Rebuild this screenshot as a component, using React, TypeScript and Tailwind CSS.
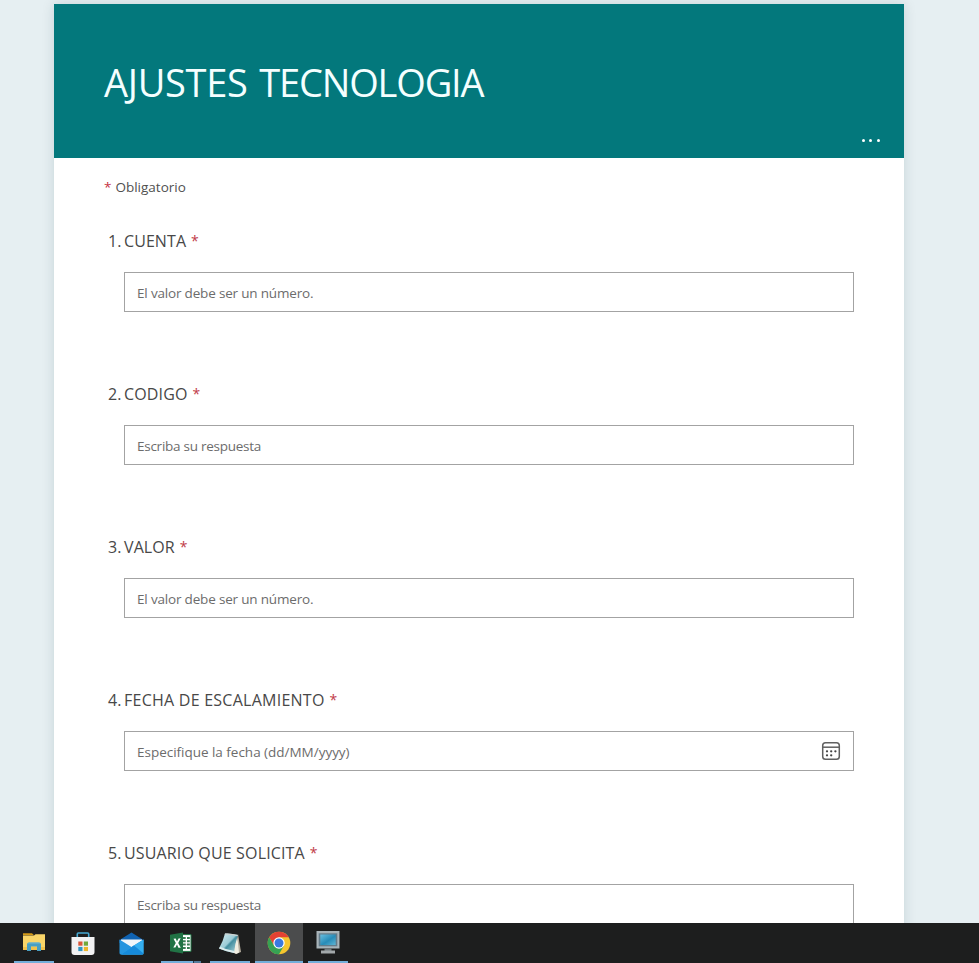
import React from 'react';

type Question = {
  title: string;
  hint: string;
  titleSpacing: string;
  hintSpacing: string;
  date?: boolean;
};

const questions: Question[] = [
  { title: 'CUENTA', hint: 'El valor debe ser un número.', titleSpacing: 'tracking-[0.08px]', hintSpacing: 'tracking-[-0.18px]' },
  { title: 'CODIGO', hint: 'Escriba su respuesta', titleSpacing: 'tracking-[0.15px]', hintSpacing: 'tracking-[-0.26px]' },
  { title: 'VALOR', hint: 'El valor debe ser un número.', titleSpacing: 'tracking-[0.1px]', hintSpacing: 'tracking-[-0.18px]' },
  { title: 'FECHA DE ESCALAMIENTO', hint: 'Especifique la fecha (dd/MM/yyyy)', titleSpacing: 'tracking-[0.25px]', hintSpacing: 'tracking-[-0.02px]', date: true },
  { title: 'USUARIO QUE SOLICITA', hint: 'Escriba su respuesta', titleSpacing: 'tracking-[0.15px]', hintSpacing: 'tracking-[-0.26px]' },
];

function CalendarIcon() {
  return (
    <svg width="20" height="20" viewBox="0 0 20 20" fill="none" stroke="#606060" strokeWidth="1.5">
      <rect x="1.7" y="1.7" width="16.6" height="16.6" rx="2.8" />
      <path d="M1.7 6.2h16.6" />
      <g fill="#444" stroke="none">
        <circle cx="6" cy="10.3" r="1.15" />
        <circle cx="10.2" cy="10.3" r="1.15" />
        <circle cx="14.4" cy="10.3" r="1.15" />
        <circle cx="6" cy="14.3" r="1.15" />
        <circle cx="10.2" cy="14.3" r="1.15" />
      </g>
    </svg>
  );
}

function QuestionBlock({ q, n }: { q: Question; n: number }) {
  return (
    <section className="h-[153px] pl-[54px] pr-[50px]">
      <div className="flex h-6 items-center whitespace-nowrap text-[16px] leading-6 text-[#484848]">
        <span className="w-4 shrink-0">{n}.</span>
        <span className={q.titleSpacing}>{q.title}</span>
        <span className="ml-[5px] text-[14px] text-[#bf3b48]">*</span>
      </div>
      <div className="ml-4 mt-[19px] flex h-10 items-center justify-between border border-[#a3a3a3] bg-white pl-3 pr-3">
        <span className={'whitespace-nowrap pt-0.5 text-[13.5px] leading-5 text-[#6c6c6c] ' + q.hintSpacing}>{q.hint}</span>
        {q.date && <CalendarIcon />}
      </div>
    </section>
  );
}

function FolderIcon() {
  return (
    <svg width="24" height="24" viewBox="0 0 24 24">
      <path d="M1 2.200h9l2 2H1z" fill="#d49a17" />
      <path d="M1 4.600h11l1.500-1.400H23V19H1z" fill="#f9d568" />
      <path d="M1 16h22v3H1z" fill="#f1c24b" />
      <path d="M5 20v-6.500q0-2 2-2h10q2 0 2 2V20h-4v-4.400H9V20z" fill="#489fc3" />
      <path d="M7 11.500h10l1.400 1H5.600z" fill="#70bad5" />
    </svg>
  );
}

function StoreIcon() {
  return (
    <svg width="24" height="25" viewBox="0 0 24 25">
      <path d="M6.300 6V3q0-1 1-1h9.400q1 0 1 1v3" fill="none" stroke="#46a9d3" strokeWidth="1.600" />
      <path d="M.5 6h23v15q0 3-3 3h-17q-3 0-3-3z" fill="#f2f2f3" />
      <path d="M7.300 10.500h4.200v4.200H7.300z" fill="#dc5639" />
      <path d="M12.800 10.500H17v4.200h-4.200z" fill="#71a83b" />
      <path d="M7.300 15.900h4.200v4.200H7.300z" fill="#3195c2" />
      <path d="M12.800 15.900H17v4.200h-4.200z" fill="#edb62c" />
    </svg>
  );
}

function MailIcon() {
  return (
    <svg width="25" height="23" viewBox="0 0 25 23">
      <path d="M.5 8 12.500.5l12 7.500v3H.5z" fill="#0f62b1" />
      <path d="M2 7.500h21V15H2z" fill="#f0f6fa" />
      <path d="M.5 7.500 12.500 15l12-7.500V21q0 1.500-1.500 1.500H2Q.5 22.500.5 21z" fill="#2595df" />
      <path d="M24.500 7.500v14q0 1-1.500 1H2L15 13.500z" fill="#35aff0" />
      <path d="m2 22.500 13-9 9.500 8q0 1-1.500 1z" fill="#168ada" />
    </svg>
  );
}

function ExcelIcon() {
  return (
    <svg width="24" height="22" viewBox="0 0 24 22">
      <path d="M12 2.600h10v16.800H12z" fill="#fff" stroke="#237746" strokeWidth="1" />
      <path d="M14 5h2.700v2H14zm4 0h2.800v2H18zm-4 3.300h2.700v2H14zm4 0h2.800v2H18zm-4 3.300h2.700v2H14zm4 0h2.800v2H18zM14 15h2.700v2H14zm4 0h2.800v2H18z" fill="#397f54" />
      <path d="M1 2.800 14 .5v21L1 19.200z" fill="#217345" />
      <path d="m4.500 6.700 2.200-.1 1.300 2.900 1.500-3.100 2.200-.1-2.500 4.800 2.600 4.700-2.400-.1L8 12.600l-1.600 3-2.100-.1 2.500-4.400z" fill="#fff" />
    </svg>
  );
}

function NotepadIcon() {
  return (
    <svg width="24" height="23" viewBox="0 0 24 23">
      <defs>
        <linearGradient id="note" x1="0" y1="0" x2="1" y2="1">
          <stop stopColor="#d7eff3" />
          <stop offset=".48" stopColor="#9bcbd6" />
          <stop offset=".55" stopColor="#438e9f" />
          <stop offset="1" stopColor="#bddee4" />
        </linearGradient>
      </defs>
      <path d="m20 2 3 18-5 2z" fill="#b6ae9f" />
      <path d="m19 2 2 18.500-3 1.500-3-1.500z" fill="#f1eee2" />
      <path d="M7 1.500Q13 1 20 3q-3 8-4 18-7-1-15-4.500Q5 9.500 7 1.500z" fill="url(#note)" />
      <path d="M1 16.500Q9 20 16 21l.3-2Q9 18 2 14.800z" fill="#dceced" />
      <path d="M7 1.500Q13 1 20 3l-.5 1.300Q13 2.400 6.700 2.800z" fill="#c9d1d0" />
    </svg>
  );
}

function ChromeIcon() {
  return (
    <svg width="24" height="24" viewBox="0 0 24 24">
      <circle cx="12" cy="12" r="11.300" fill="#f5c52e" />
      <path d="M2.200 6.350A11.300 11.300 0 0 1 21.790 6.350H12L7.100 14.830z" fill="#e44133" />
      <path d="M2.200 6.350A11.300 11.300 0 0 0 12 23.300l4.900-8.470H7.100z" fill="#36a253" />
      <circle cx="12" cy="12" r="5.700" fill="#fff" />
      <circle cx="12" cy="12" r="4.500" fill="#3979df" />
    </svg>
  );
}

function MonitorIcon() {
  return (
    <svg width="24" height="24" viewBox="0 0 24 24">
      <defs>
        <linearGradient id="screen" x1="0" y1="0" x2="1" y2="1">
          <stop stopColor="#69bedf" />
          <stop offset=".55" stopColor="#278cb8" />
          <stop offset="1" stopColor="#5eb5d4" />
        </linearGradient>
      </defs>
      <path d="M.5 0h23v17.500H.5z" fill="#a9b4b9" />
      <path d="M2.700 2.300h18.600v13H2.700z" fill="#627b89" />
      <path d="M4.300 3.500h15.400v10.500H4.300z" fill="url(#screen)" />
      <path d="M8.500 17.500h7V20h-7z" fill="#717a7e" />
      <path d="M5 19.500h14V22.500H5z" fill="#a2a8aa" />
    </svg>
  );
}

function Task({ children, running, active, wide }: { children: React.ReactNode; running?: boolean; active?: boolean; wide?: boolean }) {
  return (
    <div className={'flex h-10 w-12 shrink-0 flex-col items-center justify-between ' + (active ? 'bg-[#4b4c4d]' : '')}>
      <div className="flex h-[38px] w-full items-center justify-center pr-px pt-0.5">{children}</div>
      {running && (
        <div className={'flex h-0.5 justify-end bg-[#73aeda] ' + (active ? 'w-12' : 'w-10')}>
          {wide && <span className="h-0.5 w-2 border-l border-[#253746] bg-[#527b9b]" />}
        </div>
      )}
    </div>
  );
}

export default function App() {
  return (
    <div className="flex h-[963px] w-[979px] flex-col overflow-hidden bg-[#e6eff2] font-['Open_Sans','Noto_Sans',sans-serif]">
      <main className="h-[923px] shrink-0 overflow-hidden pl-[54px] pt-1">
        <div className="h-[1000px] w-[850px] bg-white shadow-[0_0_12px_rgba(0,60,65,0.14)]">
          <header className="flex h-[154px] flex-col justify-between bg-[#03787c] pl-[50px] pr-[24.5px]">
            <h1 className="mt-[52px] whitespace-nowrap text-[38px] font-normal leading-[52px] text-[#f4ffff]">
              <span className="tracking-[-0.3px]">AJUSTES </span>
              <span className="ml-0.5 tracking-[-1.15px]">TECNOLOGIA</span>
            </h1>
            <div className="mb-4 flex justify-end gap-[4.5px]">
              <i className="h-[3px] w-[3px] rounded-full bg-white" />
              <i className="h-[3px] w-[3px] rounded-full bg-white" />
              <i className="h-[3px] w-[3px] rounded-full bg-white" />
            </div>
          </header>
          <p className="flex h-[71px] whitespace-nowrap pl-[50px] pt-[19px] text-[13.5px] leading-5 text-[#505050]">
            <span className="mr-1 text-[#c6303f]">*</span>
            <span>Obligatorio</span>
          </p>
          {questions.map((q, i) => <QuestionBlock key={q.title} q={q} n={i + 1} />)}
        </div>
      </main>
      <footer className="flex h-10 shrink-0 gap-px bg-[#1d1e1e] pl-[10px]">
        <Task running><FolderIcon /></Task>
        <Task><StoreIcon /></Task>
        <Task><MailIcon /></Task>
        <Task running wide><ExcelIcon /></Task>
        <Task running><NotepadIcon /></Task>
        <Task running active><ChromeIcon /></Task>
        <Task running><MonitorIcon /></Task>
      </footer>
    </div>
  );
}
